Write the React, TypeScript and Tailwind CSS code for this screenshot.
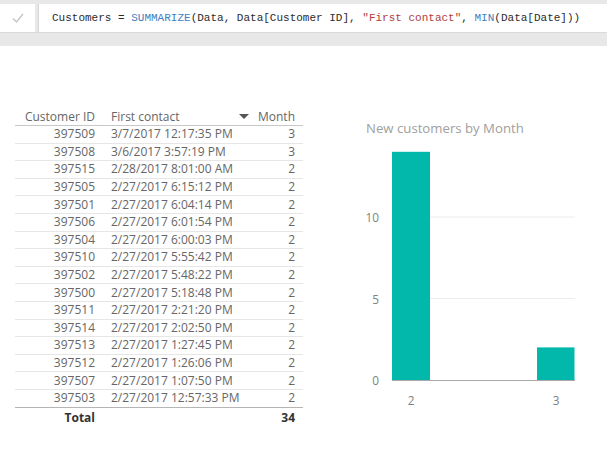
const rows = [
  ["397509", "3/7/2017 12:17:35 PM", "3"],
  ["397508", "3/6/2017 3:57:19 PM", "3"],
  ["397515", "2/28/2017 8:01:00 AM", "2"],
  ["397505", "2/27/2017 6:15:12 PM", "2"],
  ["397501", "2/27/2017 6:04:14 PM", "2"],
  ["397506", "2/27/2017 6:01:54 PM", "2"],
  ["397504", "2/27/2017 6:00:03 PM", "2"],
  ["397510", "2/27/2017 5:55:42 PM", "2"],
  ["397502", "2/27/2017 5:48:22 PM", "2"],
  ["397500", "2/27/2017 5:18:48 PM", "2"],
  ["397511", "2/27/2017 2:21:20 PM", "2"],
  ["397514", "2/27/2017 2:02:50 PM", "2"],
  ["397513", "2/27/2017 1:27:45 PM", "2"],
  ["397512", "2/27/2017 1:26:06 PM", "2"],
  ["397507", "2/27/2017 1:07:50 PM", "2"],
  ["397503", "2/27/2017 12:57:33 PM", "2"],
];

function FormulaBar() {
  return (
    <div className="bg-[#e8e8e8]">
      <div className="h-[4px]" />
      <div className="flex h-[28px]">
        <div className="w-[35px] bg-white flex items-center justify-center">
          <svg width="12" height="10" viewBox="0 0 12 10">
            <path d="M1 5.5 L4.5 9 L11 1" fill="none" stroke="#c4c4c4" strokeWidth="1.3" />
          </svg>
        </div>
        <div className="w-[3px]" />
        <div className="flex-1 bg-white border-l border-[#d6d6d6] flex items-center pl-[13px] font-['Liberation_Mono',monospace] text-[11px] text-[#2b2b2b] whitespace-pre">
          <span>Customers = </span>
          <span className="text-[#3f7fc1]">SUMMARIZE</span>
          <span>(Data, Data[Customer ID], </span>
          <span className="text-[#b0403f]">"First contact"</span>
          <span>, </span>
          <span className="text-[#3f7fc1]">MIN</span>
          <span>(Data[Date]))</span>
        </div>
      </div>
      <div className="h-[14px] border-t border-[#dadada]" />
    </div>
  );
}

function Table() {
  return (
    <div className="ml-[15px] mt-[62px] w-[288px] text-[12px] text-[#666] font-['Open_Sans',sans-serif]">
      <div className="flex h-[18px] pt-[3px] leading-[12px] border-b border-[#c8c8c8]">
        <div className="w-[80px] text-right">Customer ID</div>
        <div className="ml-[16px] flex-1 flex items-start">
          <span>First contact</span>
          <svg className="ml-auto mr-[2px] mt-[3px]" width="10" height="5" viewBox="0 0 10 5">
            <path d="M0 0 L10 0 L5 5 Z" fill="#555" />
          </svg>
        </div>
        <div className="w-[52px] text-right pr-[8px]">Month</div>
      </div>
      {rows.map((r, i) => (
        <div
          key={i}
          className={`flex h-[17.6px] items-center leading-[12px] ${i < rows.length - 1 ? "border-b border-[#e6e6e6]" : "border-b border-[#b5b5b5]"}`}
        >
          <div className="w-[80px] text-right">{r[0]}</div>
          <div className="ml-[16px] flex-1">{r[1]}</div>
          <div className="w-[52px] text-right pr-[8px]">{r[2]}</div>
        </div>
      ))}
      <div className="flex h-[20px] items-center font-bold text-[#333]">
        <div className="w-[80px] text-right">Total</div>
        <div className="ml-[16px] flex-1" />
        <div className="w-[52px] text-right pr-[8px]">34</div>
      </div>
    </div>
  );
}

function Chart() {
  const base = 244;
  const unit = 16.3;
  return (
    <div className="ml-[27px] mt-[74px] w-[277px] font-['Open_Sans',sans-serif]">
      <div className="pl-[36px] h-[16px] leading-[16px] text-[13.2px] text-[#a0a0a0]">New customers by Month</div>
      <svg width="277" height="284" viewBox="0 0 277 284">
        <line x1="62" x2="245" y1={base - 10 * unit} y2={base - 10 * unit} stroke="#ececec" />
        <line x1="62" x2="245" y1={base - 5 * unit} y2={base - 5 * unit} stroke="#ececec" />
        <rect x="62" y={base - 14 * unit} width="38" height={14 * unit} fill="#01b8aa" />
        <rect x="207" y={base - 2 * unit} width="37.5" height={2 * unit} fill="#01b8aa" />
        <line x1="62" x2="245" y1={base + 0.5} y2={base + 0.5} stroke="#a8a8a8" />
        <g fill="#808080" fontSize="11.8" textAnchor="end" dominantBaseline="central">
          <text x="49" y={base - 10 * unit}>10</text>
          <text x="49" y={base - 5 * unit}>5</text>
          <text x="49" y={base}>0</text>
        </g>
        <g fill="#808080" fontSize="11.8" textAnchor="middle" dominantBaseline="central">
          <text x="81" y="264">2</text>
          <text x="226" y="264">3</text>
        </g>
      </svg>
    </div>
  );
}

export default function App() {
  return (
    <div className="w-[607px] h-[461px] bg-white overflow-hidden">
      <FormulaBar />
      <div className="flex">
        <Table />
        <Chart />
      </div>
    </div>
  );
}
